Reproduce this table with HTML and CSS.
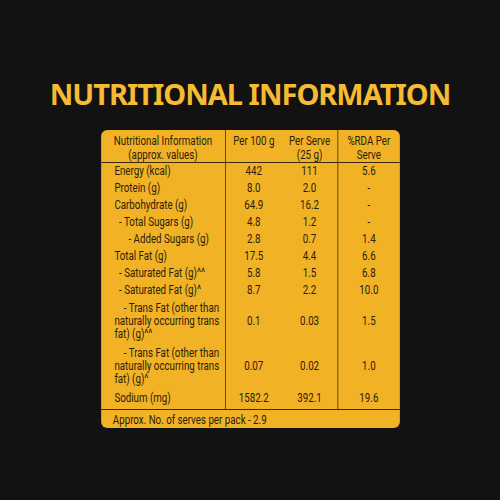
FILE: index.html
```html
<!DOCTYPE html>
<html>
<head>
<meta charset="utf-8">
<link rel="stylesheet" href="styles.css">
</head>
<body>
<div class="page">
  <h1 class="title">NUTRITIONAL INFORMATION</h1>
  <div class="card">
    <table class="nt">
      <colgroup>
        <col class="c1"><col class="c2"><col class="c3"><col class="c4">
      </colgroup>
      <thead>
        <tr>
          <th class="name-h">Nutritional Information<br>(approx. values)</th>
          <th class="top">Per 100 g</th>
          <th class="nob">Per Serve<br>(25 g)</th>
          <th class="div">%RDA Per<br>Serve</th>
        </tr>
      </thead>
      <tbody>
        <tr class="first"><td class="n">Energy (kcal)</td><td>442</td><td>111</td><td class="div">5.6</td></tr>
        <tr><td class="n">Protein (g)</td><td>8.0</td><td>2.0</td><td class="div">-</td></tr>
        <tr><td class="n">Carbohydrate (g)</td><td>64.9</td><td>16.2</td><td class="div">-</td></tr>
        <tr><td class="n i1">- Total Sugars (g)</td><td>4.8</td><td>1.2</td><td class="div">-</td></tr>
        <tr><td class="n i2">- Added Sugars (g)</td><td>2.8</td><td>0.7</td><td class="div">1.4</td></tr>
        <tr><td class="n">Total Fat (g)</td><td>17.5</td><td>4.4</td><td class="div">6.6</td></tr>
        <tr><td class="n i1">- Saturated Fat (g)^^</td><td>5.8</td><td>1.5</td><td class="div">6.8</td></tr>
        <tr><td class="n i1">- Saturated Fat (g)^</td><td>8.7</td><td>2.2</td><td class="div">10.0</td></tr>
        <tr class="tall"><td class="n"><span class="l1">- Trans Fat (other than</span><br>naturally occurring trans<br>fat) (g)^^</td><td>0.1</td><td>0.03</td><td class="div">1.5</td></tr>
        <tr class="tall"><td class="n"><span class="l1">- Trans Fat (other than</span><br>naturally occurring trans<br>fat) (g)^</td><td>0.07</td><td>0.02</td><td class="div">1.0</td></tr>
        <tr class="last"><td class="n">Sodium (mg)</td><td>1582.2</td><td>392.1</td><td class="div">19.6</td></tr>
      </tbody>
    </table>
    <div class="foot">Approx. No. of serves per pack - 2.9</div>
  </div>
</div>
</body>
</html>
```

FILE: styles.css
```css
html, body {
  margin: 0;
  padding: 0;
  background: #121212;
}
.page {
  width: 500px;
  height: 500px;
  padding-top: 76px;
  box-sizing: border-box;
  overflow: hidden;
}
.title {
  margin: 0 0 18px 0;
  text-align: center;
  font-family: "Noto Sans", "DejaVu Sans", sans-serif;
  font-weight: bold;
  font-size: 29px;
  letter-spacing: -1px;
  line-height: 36px;
  color: #f5bb32;
  white-space: nowrap;
}
/* the card is drawn 383px wide and condensed horizontally to 299px,
   standing in for the condensed typeface of the label */
.card {
  width: 383px;
  margin: 0 auto;
  background: #f1b226;
  border-radius: 8px / 6px;
  overflow: hidden;
  color: #2a200c;
  font-family: Roboto, "Noto Sans", sans-serif;
  font-size: 12.5px;
  transform: scaleX(0.78);
  transform-origin: 50% 0;
}
.nt {
  width: 100%;
  border-collapse: collapse;
  table-layout: fixed;
}
.c1 { width: 159px; }
.c2 { width: 73px; }
.c3 { width: 71px; }
.c4 { width: 80px; }
.nt th {
  font-weight: normal;
  line-height: 14px;
  padding: 4px 0 0 0;
  text-align: center;
  vertical-align: middle;
  border-bottom: 1px solid #3b2b0e;
  white-space: nowrap;
}
.nt th.name-h { border-right: 1px solid #3b2b0e; }
.nt th.top { vertical-align: top; }
.nt th.div, .nt td.div { border-left: 1px solid #3b2b0e; }
.nt td {
  line-height: 13px;
  padding: 2px 0;
  text-align: center;
  vertical-align: middle;
  white-space: nowrap;
}
.nt td.n {
  text-align: left;
  padding-left: 17px;
  border-right: 1px solid #3b2b0e;
}
.nt td.i1 { padding-left: 23px; }
.nt td.i2 { padding-left: 35px; }
.nt tr.first td { padding-top: 1px; }
.nt tr.tall td { padding-top: 3px; padding-bottom: 3px; }
.nt tr.last td { padding-top: 3px; padding-bottom: 5px; }
.l1 { padding-left: 12px; }
.foot {
  border-top: 1px solid #3b2b0e;
  padding: 3px 0 2px 15px;
  line-height: 13px;
  height: 13px;
}
```
